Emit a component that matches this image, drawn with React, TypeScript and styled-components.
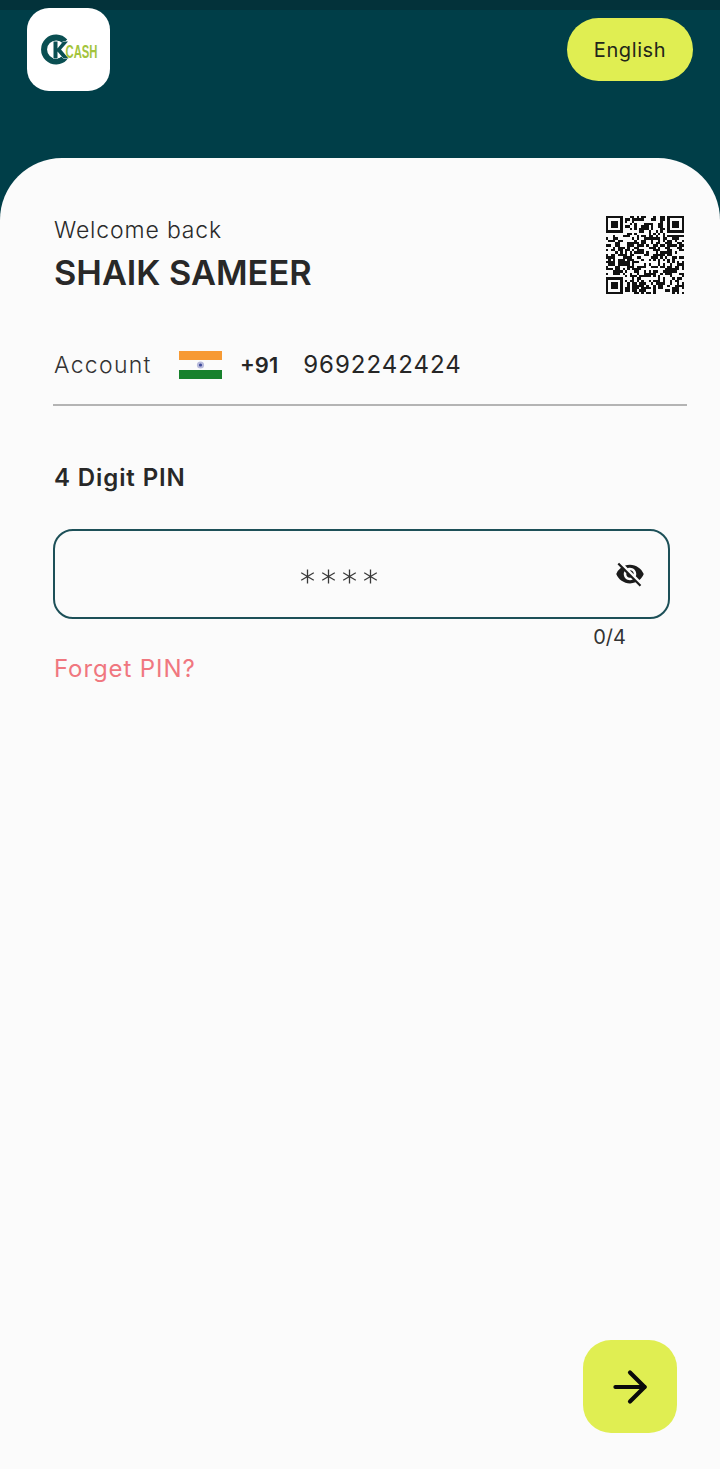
import React from 'react';
import styled, { createGlobalStyle } from 'styled-components';
import { MdVisibilityOff } from 'react-icons/md';
import { ArrowRight } from 'lucide-react';

const GlobalStyle = createGlobalStyle`
  html, body {
    margin: 0;
    padding: 0;
    background: #fbfbfb;
    font-family: 'Inter', 'Noto Sans', sans-serif;
  }
  * { box-sizing: border-box; }
`;

const Page = styled.div`
  width: 720px;
  height: 1469px;
  background: #003e48;
  display: flex;
  flex-direction: column;
  overflow: hidden;
`;

const Header = styled.header`
  position: relative;
  height: 158px;
  padding: 8px 27px 0;
  display: flex;
  justify-content: space-between;
  align-items: flex-start;
  &::before {
    content: '';
    position: absolute;
    top: 0;
    left: 0;
    right: 0;
    height: 10px;
    background: #03323a;
  }
`;

const LogoTile = styled.div`
  position: relative;
  width: 83px;
  height: 83px;
  border-radius: 22px;
  background: #ffffff;
  display: flex;
  align-items: center;
  justify-content: center;
`;

const LanguageButton = styled.button`
  position: relative;
  width: 126px;
  height: 63px;
  margin-top: 10px;
  border: 0;
  border-radius: 32px;
  background: #e0ee52;
  color: #22261a;
  font-family: 'Inter', sans-serif;
  font-size: 20px;
  letter-spacing: 0.6px;
`;

const Sheet = styled.main`
  flex: 1;
  background: #fbfbfb;
  border-radius: 62px 62px 0 0;
  padding: 56px 33px 36px 53px;
  display: flex;
  flex-direction: column;
`;

const WelcomeRow = styled.div`
  display: flex;
  justify-content: space-between;
  align-items: flex-start;
  padding-right: 3px;
`;

const QrFrame = styled.div`
  margin-top: 2px;
`;

const WelcomeLabel = styled.div`
  padding-left: 1px;
  font-size: 23px;
  line-height: 32px;
  font-weight: 300;
  color: #2a2a2a;
  letter-spacing: 0.85px;
`;

const UserName = styled.div`
  margin-top: 7px;
  padding-left: 1px;
  font-size: 34.3px;
  line-height: 40px;
  font-weight: 600;
  color: #282828;
`;

const AccountRow = styled.div`
  margin-top: 47px;
  height: 61px;
  padding-bottom: 20px;
  padding-left: 1px;
  border-bottom: 2px solid #b4b4b4;
  display: flex;
  align-items: center;
`;

const AccountLabel = styled.span`
  width: 125px;
  font-size: 23px;
  font-weight: 300;
  letter-spacing: 1.3px;
  color: #333333;
`;

const Flag = styled.svg`
  width: 43px;
  height: 28px;
`;

const DialCode = styled.span`
  margin-left: 18px;
  font-size: 22px;
  font-weight: 600;
  color: #262626;
`;

const PhoneNumber = styled.span`
  margin-left: 25px;
  font-size: 24px;
  font-weight: 400;
  letter-spacing: 1px;
  color: #262626;
`;

const PinLabel = styled.div`
  margin-top: 56px;
  padding-left: 1px;
  font-size: 24px;
  line-height: 32px;
  font-weight: 600;
  letter-spacing: 0.9px;
  color: #282828;
`;

const PinField = styled.div`
  position: relative;
  margin-top: 35px;
  width: 617px;
  height: 90px;
  border: 2px solid #1d5058;
  border-radius: 20px;
  display: flex;
  align-items: center;
  justify-content: center;
  padding-right: 46px;
  color: #2a2a2a;
`;

const PinMask = styled.div`
  display: flex;
  gap: 6px;
  margin-top: 4px;
`;

const EyeToggle = styled.span`
  position: absolute;
  right: 23px;
  top: 28px;
  display: flex;
  color: #1b1b1b;
`;

const Counter = styled.div`
  width: 573px;
  margin-top: 6px;
  text-align: right;
  font-size: 20px;
  line-height: 24px;
  color: #333333;
`;

const ForgetLink = styled.a`
  margin-top: 4px;
  padding-left: 1px;
  font-size: 24px;
  line-height: 32px;
  letter-spacing: 0.9px;
  color: #f0777f;
`;

const Footer = styled.div`
  margin-top: auto;
  display: flex;
  justify-content: flex-end;
  padding-right: 10px;
`;

const NextButton = styled.button`
  width: 94px;
  height: 93px;
  padding: 0;
  border: 0;
  border-radius: 28px;
  background: #e0ee52;
  color: #0a0a0a;
  display: flex;
  align-items: center;
  justify-content: center;
`;

const Logo = () => (
  <svg width="62" height="36" viewBox="0 0 62 36">
    <path d="M27 9.5 A12 12 0 1 0 27 25.5" fill="none" stroke="#0a4f52" strokeWidth="6" />
    <path
      d="M15.5 9.5v17h4v-7l6 7h5l-7.5-9 7-8h-5l-5.5 7V9.5z"
      fill="#0a4f52"
      stroke="#ffffff"
      strokeWidth="1"
      paintOrder="stroke"
    />
    <text
      transform="translate(27.5 25.5) scale(0.595 1)"
      fontFamily="Liberation Sans, sans-serif"
      fontSize="19"
      fontWeight="700"
      fill="#a3c43c"
    >
      CASH
    </text>
  </svg>
);

const IndiaFlag = () => (
  <Flag viewBox="0 0 43 28">
    <rect width="43" height="9" fill="#f79a34" />
    <rect y="9" width="43" height="10" fill="#fbfbfb" />
    <rect y="19" width="43" height="9" fill="#17812c" />
    <circle cx="21.5" cy="14" r="3.6" fill="#b9bbdc" />
    <circle cx="21.5" cy="14" r="1.6" fill="#3e4a9a" />
  </Flag>
);

const Asterisk = () => (
  <svg width="15" height="15" viewBox="0 0 15 15" stroke="#3a3a3a" strokeWidth="1.3">
    <path d="M7.5 0.5v14M1.2 3.8l12.6 7.4M13.8 3.8L1.2 11.2" />
  </svg>
);

const QR_SIZE = 33;
const finder = (r: number, c: number) => {
  const inBox = (ox: number, oy: number) => {
    const x = c - ox;
    const y = r - oy;
    if (x < 0 || y < 0 || x > 6 || y > 6) return null;
    if (x === 0 || y === 0 || x === 6 || y === 6) return true;
    if (x >= 2 && x <= 4 && y >= 2 && y <= 4) return true;
    return false;
  };
  return inBox(0, 0) ?? inBox(QR_SIZE - 7, 0) ?? inBox(0, QR_SIZE - 7);
};

const isQuietGap = (r: number, c: number) =>
  (r <= 7 && c <= 7) || (r <= 7 && c >= QR_SIZE - 8) || (r >= QR_SIZE - 8 && c <= 7);

const buildQr = () => {
  const cells: { r: number; c: number }[] = [];
  let seed = 4242;
  for (let r = 0; r < QR_SIZE; r++) {
    for (let c = 0; c < QR_SIZE; c++) {
      seed = (seed * 1103515245 + 12345) & 0x7fffffff;
      const f = finder(r, c);
      const on = f !== null ? f : isQuietGap(r, c) ? false : (seed >> 16) % 100 < 52;
      if (on) cells.push({ r, c });
    }
  }
  return cells;
};

const QrCode = () => (
  <svg width="78" height="78" viewBox={`0 0 ${QR_SIZE} ${QR_SIZE}`} shapeRendering="crispEdges">
    {buildQr().map(({ r, c }) => (
      <rect key={`${r}-${c}`} x={c} y={r} width="1" height="1" fill="#111111" />
    ))}
  </svg>
);

export default function App() {
  return (
    <>
      <GlobalStyle />
      <Page>
        <Header>
          <LogoTile>
            <Logo />
          </LogoTile>
          <LanguageButton>English</LanguageButton>
        </Header>
        <Sheet>
          <WelcomeRow>
            <div>
              <WelcomeLabel>Welcome back</WelcomeLabel>
              <UserName>SHAIK SAMEER</UserName>
            </div>
            <QrFrame>
              <QrCode />
            </QrFrame>
          </WelcomeRow>
          <AccountRow>
            <AccountLabel>Account</AccountLabel>
            <IndiaFlag />
            <DialCode>+91</DialCode>
            <PhoneNumber>9692242424</PhoneNumber>
          </AccountRow>
          <PinLabel>4 Digit PIN</PinLabel>
          <PinField>
            <PinMask>
              <Asterisk />
              <Asterisk />
              <Asterisk />
              <Asterisk />
            </PinMask>
            <EyeToggle>
              <MdVisibilityOff size={30} />
            </EyeToggle>
          </PinField>
          <Counter>0/4</Counter>
          <ForgetLink>Forget PIN?</ForgetLink>
          <Footer>
            <NextButton>
              <ArrowRight size={50} strokeWidth={2} />
            </NextButton>
          </Footer>
        </Sheet>
      </Page>
    </>
  );
}
